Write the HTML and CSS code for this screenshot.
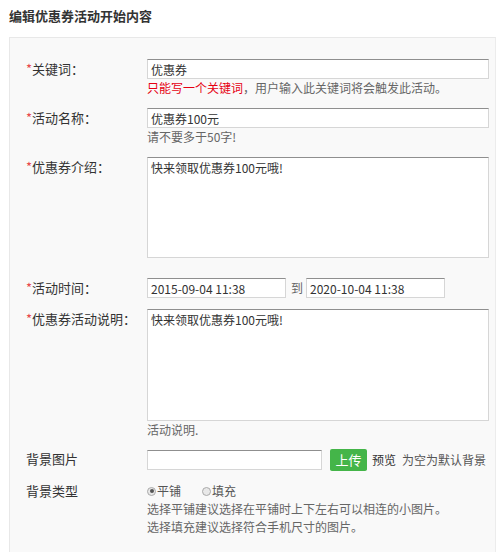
FILE: index.html
```html
<!DOCTYPE html>
<html lang="zh-CN">
<head>
<meta charset="utf-8">
<title>编辑优惠券活动开始内容</title>
<link rel="stylesheet" href="styles.css">
</head>
<body>
<h3 class="title">编辑优惠券活动开始内容</h3>
<div class="panel">
  <div class="row">
    <label class="lbl"><span class="req">*</span>关键词：</label>
    <div class="field">
      <input class="ipt ipt-full" type="text" value="优惠券">
      <p class="help"><span class="err">只能写一个关键词</span>，用户输入此关键词将会触发此活动。</p>
    </div>
  </div>
  <div class="row">
    <label class="lbl"><span class="req">*</span>活动名称：</label>
    <div class="field">
      <input class="ipt ipt-full" type="text" value="优惠券100元">
      <p class="help">请不要多于50字!</p>
    </div>
  </div>
  <div class="row row-wide">
    <label class="lbl"><span class="req">*</span>优惠券介绍：</label>
    <div class="field">
      <textarea class="txt txt-intro">快来领取优惠券100元哦!</textarea>
    </div>
  </div>
  <div class="row">
    <label class="lbl"><span class="req">*</span>活动时间：</label>
    <div class="field field-inline">
      <input class="ipt ipt-date" type="text" value="2015-09-04 11:38">
      <span class="sep">到</span>
      <input class="ipt ipt-date" type="text" value="2020-10-04 11:38">
    </div>
  </div>
  <div class="row">
    <label class="lbl"><span class="req">*</span>优惠券活动说明：</label>
    <div class="field">
      <textarea class="txt txt-desc">快来领取优惠券100元哦!</textarea>
      <p class="help help-tight">活动说明.</p>
    </div>
  </div>
  <div class="row">
    <label class="lbl lbl-plain">背景图片</label>
    <div class="field field-inline">
      <input class="ipt ipt-file" type="text" value="">
      <button class="btn-upload" type="button">上传</button>
      <span class="preview">预览</span>
      <span class="note">为空为默认背景</span>
    </div>
  </div>
  <div class="row">
    <label class="lbl lbl-plain lbl-radio">背景类型</label>
    <div class="field">
      <div class="radios">
        <span class="radio"><i class="dot checked"></i>平铺</span>
        <span class="radio"><i class="dot"></i>填充</span>
      </div>
      <p class="help">选择平铺建议选择在平铺时上下左右可以相连的小图片。</p>
      <p class="help">选择填充建议选择符合手机尺寸的图片。</p>
    </div>
  </div>
</div>
</body>
</html>
```

FILE: styles.css
```css
* { box-sizing: border-box; }

body {
  margin: 0;
  background: #fff;
  font-family: "Noto Sans CJK SC", "Noto Sans", "Liberation Sans", sans-serif;
  color: #333;
  font-size: 12px;
}

.title {
  margin: 0;
  padding: 7px 9px;
  font-size: 13px;
  line-height: 18px;
  font-weight: bold;
  color: #333;
}

.panel {
  margin: 5px 1px 0 9px;
  border: 1px solid #e8e8e8;
  border-right-color: #ececec;
  background: #f9f9f9;
  padding: 21px 0 30px 0;
}

.row {
  display: flex;
  align-items: flex-start;
  margin-bottom: 11px;
}

.row-wide { margin-bottom: 20px; }

.lbl {
  width: 137px;
  flex: none;
  padding-left: 16px;
  font-size: 13px;
  line-height: 20px;
  color: #333;
  white-space: nowrap;
}

.lbl-radio { line-height: 18px; }

.req { color: #e8494c; }

.field { width: 342px; }

.field-inline {
  display: flex;
  align-items: center;
}

.ipt {
  display: block;
  height: 20px;
  padding: 0 3px;
  border: 1px solid #d6d6d6;
  border-top-color: #8f8f8f;
  background: #fff;
  font: inherit;
  font-size: 12px;
  color: #333;
  line-height: 18px;
  outline: none;
}

.ipt-full { width: 342px; }
.ipt-date { width: 139px; }
.ipt-file { width: 175px; }

.sep {
  margin: 0 3px 0 5px;
  color: #666;
  line-height: 20px;
}

.txt {
  display: block;
  width: 342px;
  padding: 1px 3px;
  border: 1px solid #d6d6d6;
  border-top-color: #8f8f8f;
  background: #fff;
  font: inherit;
  font-size: 12px;
  line-height: 18px;
  color: #333;
  resize: none;
  outline: none;
}

.txt-intro { height: 101px; }
.txt-desc { height: 112px; }

.help {
  margin: 0;
  line-height: 18px;
  color: #666;
}

.help-tight { line-height: 17px; }

.err { color: #e60012; }

.btn-upload {
  width: 37px;
  height: 22px;
  margin-left: 8px;
  padding: 0;
  border: 0;
  border-radius: 2px;
  background: #44b549;
  color: #fff;
  font: inherit;
  font-size: 13px;
  line-height: 22px;
}

.preview {
  margin-left: 5px;
  color: #333;
  line-height: 20px;
}

.note {
  margin-left: 6px;
  color: #555;
  line-height: 20px;
}

.radios {
  display: flex;
  line-height: 18px;
  color: #555;
}

.radio {
  display: inline-flex;
  align-items: center;
  margin-right: 21px;
}

.dot {
  width: 9px;
  height: 9px;
  margin-right: 1px;
  border: 1px solid #aaa;
  border-radius: 50%;
  background: #e8e8e8;
  position: relative;
}

.dot.checked::after {
  content: "";
  position: absolute;
  left: 1.5px;
  top: 1.5px;
  width: 4px;
  height: 4px;
  border-radius: 50%;
  background: #555;
}
```
